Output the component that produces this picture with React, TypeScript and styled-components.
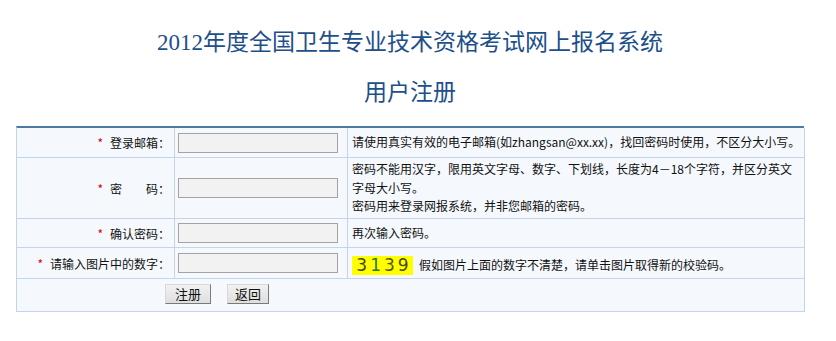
import React from 'react';
import styled, {createGlobalStyle} from "styled-components";

const GlobalStyle = createGlobalStyle`
  html, body {
    margin: 0;
    padding: 0;
    background: #fff;
  }
  body {
    font-family: "Noto Sans CJK SC", "Liberation Sans", sans-serif;
    font-size: 12px;
    color: #111;
  }
`

const Page = styled.div`
  width: 820px;
  padding-top: 31px;
`

const Title = styled.h1<{ $size: number }>`
  margin: 0;
  text-align: center;
  font-family: "Liberation Serif", "Noto Sans CJK SC", serif;
  font-weight: normal;
  font-size: ${p => p.$size}px;
  line-height: 24px;
  color: #1d4f8b;
`

const SubTitle = styled(Title)`
  margin-top: 26px;
`

const Form = styled.div`
  box-sizing: border-box;
  margin: 21px 0 0 16px;
  width: 788px;
  display: grid;
  grid-template-columns: 158px 173px 1fr;
  grid-template-rows: 30px 61px 29px 31px 33px;
  border-top: 2px solid #4d79a3;
  border-left: 1px solid #c2d5ec;
  background: #f5f9fe;
`

const Cell = styled.div`
  box-sizing: border-box;
  display: flex;
  align-items: center;
  border-right: 1px solid #c2d5ec;
  border-bottom: 1px solid #c2d5ec;
`

const LabelCell = styled(Cell)`
  justify-content: flex-end;
  padding-right: 4px;
  white-space: pre;
`

const InputCell = styled(Cell)`
  padding-left: 3px;
`

const NoteCell = styled(Cell)<{ $nowrap?: boolean }>`
  padding: 0 4px;
  line-height: 18.5px;
  white-space: ${p => (p.$nowrap ? 'nowrap' : 'normal')};
`

const ButtonCell = styled(Cell)`
  grid-column: 1 / -1;
  align-items: flex-start;
  padding: 5px 0 0 148px;
  gap: 16px;
`

const Star = styled.span`
  color: #e00000;
  margin-right: 7px;
`

const TextInput = styled.input`
  box-sizing: border-box;
  width: 160px;
  height: 20px;
  margin: 0;
  border: 1px solid #a3a3a3;
  background: #f2f2f2;
`

const Captcha = styled.span`
  box-sizing: border-box;
  display: inline-flex;
  align-items: center;
  justify-content: center;
  width: 61px;
  height: 19px;
  background: #ffff00;
  font-family: "DejaVu Sans", sans-serif;
  font-size: 17px;
  letter-spacing: 3px;
  padding-left: 3px;
`

const Digit = styled.span<{ $color: string }>`
  color: ${p => p.$color};
`

const CaptchaLine = styled.div`
  display: flex;
  align-items: flex-end;
  gap: 6px;
  margin-top: 4px;
`

const Button = styled.button<{ $w: number }>`
  box-sizing: border-box;
  width: ${p => p.$w}px;
  height: 20px;
  padding: 0;
  font-family: "Noto Sans CJK SC", sans-serif;
  font-size: 13px;
  line-height: 18px;
  color: #111;
  background: linear-gradient(#f2f2f2, #dedede);
  border: 1px solid;
  border-color: #d8d8d8 #7a7a7a #7a7a7a #d8d8d8;
`

const Label = ({text}: { text: string }) => (
    <LabelCell><Star>*</Star>{text}</LabelCell>
)

const Field = () => (
    <InputCell><TextInput/></InputCell>
)

export default function App() {
    return (
        <Page>
            <GlobalStyle/>
            <Title $size={23}>2012年度全国卫生专业技术资格考试网上报名系统</Title>
            <SubTitle $size={23}>用户注册</SubTitle>
            <Form>
                <Label text="登录邮箱："/>
                <Field/>
                <NoteCell $nowrap>请使用真实有效的电子邮箱(如zhangsan@xx.xx)，找回密码时使用，不区分大小写。</NoteCell>

                <Label text={"密　　码："}/>
                <Field/>
                <NoteCell>
                    <div>
                        密码不能用汉字，限用英文字母、数字、下划线，长度为4－18个字符，并区分英文字母大小写。
                        <br/>
                        密码用来登录网报系统，并非您邮箱的密码。
                    </div>
                </NoteCell>

                <Label text="确认密码："/>
                <Field/>
                <NoteCell>再次输入密码。</NoteCell>

                <Label text="请输入图片中的数字："/>
                <Field/>
                <NoteCell>
                    <CaptchaLine>
                        <Captcha>
                            <Digit $color="#45450f">3</Digit>
                            <Digit $color="#2a7a2a">1</Digit>
                            <Digit $color="#55550f">3</Digit>
                            <Digit $color="#48481a">9</Digit>
                        </Captcha>
                        <span>假如图片上面的数字不清楚，请单击图片取得新的校验码。</span>
                    </CaptchaLine>
                </NoteCell>

                <ButtonCell>
                    <Button $w={46}>注册</Button>
                    <Button $w={42}>返回</Button>
                </ButtonCell>
            </Form>
        </Page>
    );
}
